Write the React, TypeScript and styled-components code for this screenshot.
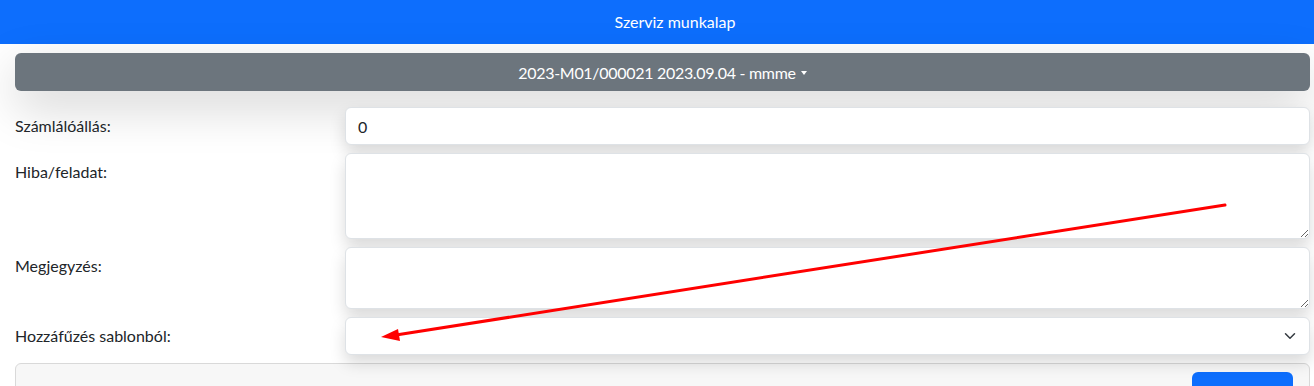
import styled, { createGlobalStyle } from 'styled-components'

const GlobalStyles = createGlobalStyle`
  body {
    margin: 0;
    font-family: Lato, "Open Sans", sans-serif;
    font-size: 16px;
    line-height: 24px;
    color: #212529;
    background: #fff;
    overflow: hidden;
  }
  * {
    box-sizing: border-box;
  }
`

const Page = styled.div`
  position: relative;
  width: 1314px;
  height: 386px;
  overflow: hidden;
`

const TopBar = styled.header`
  height: 44px;
  padding-left: 36px;
  background: #0d6efd;
  color: #fff;
  display: flex;
  align-items: center;
  justify-content: center;
  font-size: 16px;
`

const Content = styled.div`
  padding: 9px 4px 0 15px;
`

const SheetPicker = styled.button`
  width: 100%;
  height: 38px;
  border: 0;
  border-radius: 6px;
  background: #6c757d;
  color: #fff;
  font-family: inherit;
  font-size: 16px;
  letter-spacing: -0.3px;
  box-shadow: 0 1rem 3rem rgba(0, 0, 0, 0.175);
  display: flex;
  align-items: center;
  justify-content: center;

  &::after {
    content: '';
    display: inline-block;
    margin-left: 5px;
    margin-top: 1px;
    border-top: 4px solid;
    border-right: 3.5px solid transparent;
    border-left: 3.5px solid transparent;
  }
`

const Form = styled.div`
  margin-top: 16px;
  display: flex;
  flex-direction: column;
  gap: 8px;
`

const Row = styled.div`
  display: grid;
  grid-template-columns: 330px 1fr;
`

const Label = styled.label`
  padding-top: 7px;
`

const fieldBase = `
  width: 100%;
  border: 1px solid #dee2e6;
  border-radius: 6px;
  background: #fff;
  font-family: inherit;
  font-size: 16px;
  color: #212529;
  padding: 6px 12px;
  box-shadow: 0 0.5rem 1rem rgba(0, 0, 0, 0.15);
  outline: none;
`

const TextInput = styled.input`
  ${fieldBase}
  height: 38px;
`

const TextArea = styled.textarea<{ $h: number }>`
  ${fieldBase}
  display: block;
  height: ${p => p.$h}px;
  resize: vertical;
`

const SelectWrap = styled.div`
  position: relative;
`

const Select = styled.select`
  ${fieldBase}
  height: 38px;
  appearance: none;
`

const Chevron = styled.svg`
  position: absolute;
  right: 12px;
  top: 13px;
  pointer-events: none;
`

const ItemsCard = styled.div`
  margin-top: 8px;
  background: #f7f7f7;
  border: 1px solid #d9d9d9;
  border-radius: 6px;
  padding: 8px 16px 8px 40px;
  display: flex;
  align-items: center;
  justify-content: space-between;
`

const CardTitle = styled.span`
  font-size: 16px;
`

const PrimaryButton = styled.button`
  width: 101px;
  height: 38px;
  border: 0;
  border-radius: 6px;
  background: #0d6efd;
  color: #fff;
  font-family: inherit;
  font-size: 16px;
`

const Annotation = styled.svg`
  position: absolute;
  left: 0;
  top: 0;
  pointer-events: none;
`

const App = () => {
  return (
    <>
      <GlobalStyles />
      <Page>
        <TopBar>Szerviz munkalap</TopBar>
        <Content>
          <SheetPicker>2023-M01/000021 2023.09.04 - mmme</SheetPicker>
          <Form>
            <Row>
              <Label>Számlálóállás:</Label>
              <TextInput defaultValue="0" />
            </Row>
            <Row>
              <Label>Hiba/feladat:</Label>
              <TextArea $h={86} />
            </Row>
            <Row>
              <Label>Megjegyzés:</Label>
              <TextArea $h={62} />
            </Row>
            <Row>
              <Label>Hozzáfűzés sablonból:</Label>
              <SelectWrap>
                <Select defaultValue="">
                  <option value=""></option>
                </Select>
                <Chevron width="16" height="12" viewBox="0 0 16 16">
                  <path d="m2 5 6 6 6-6" fill="none" stroke="#343a40" strokeWidth="2" strokeLinecap="round" strokeLinejoin="round" />
                </Chevron>
              </SelectWrap>
            </Row>
          </Form>
          <ItemsCard>
            <CardTitle>Anyagfelhasználás</CardTitle>
            <PrimaryButton>Hozzáadás</PrimaryButton>
          </ItemsCard>
        </Content>
        <Annotation width="1314" height="386" viewBox="0 0 1314 386">
          <line x1="1225" y1="205" x2="396" y2="335" stroke="#ff0000" strokeWidth="3" strokeLinecap="round" />
          <polygon points="381,337 398,329 400,341" fill="#ff0000" />
        </Annotation>
      </Page>
    </>
  )
}

export default App
